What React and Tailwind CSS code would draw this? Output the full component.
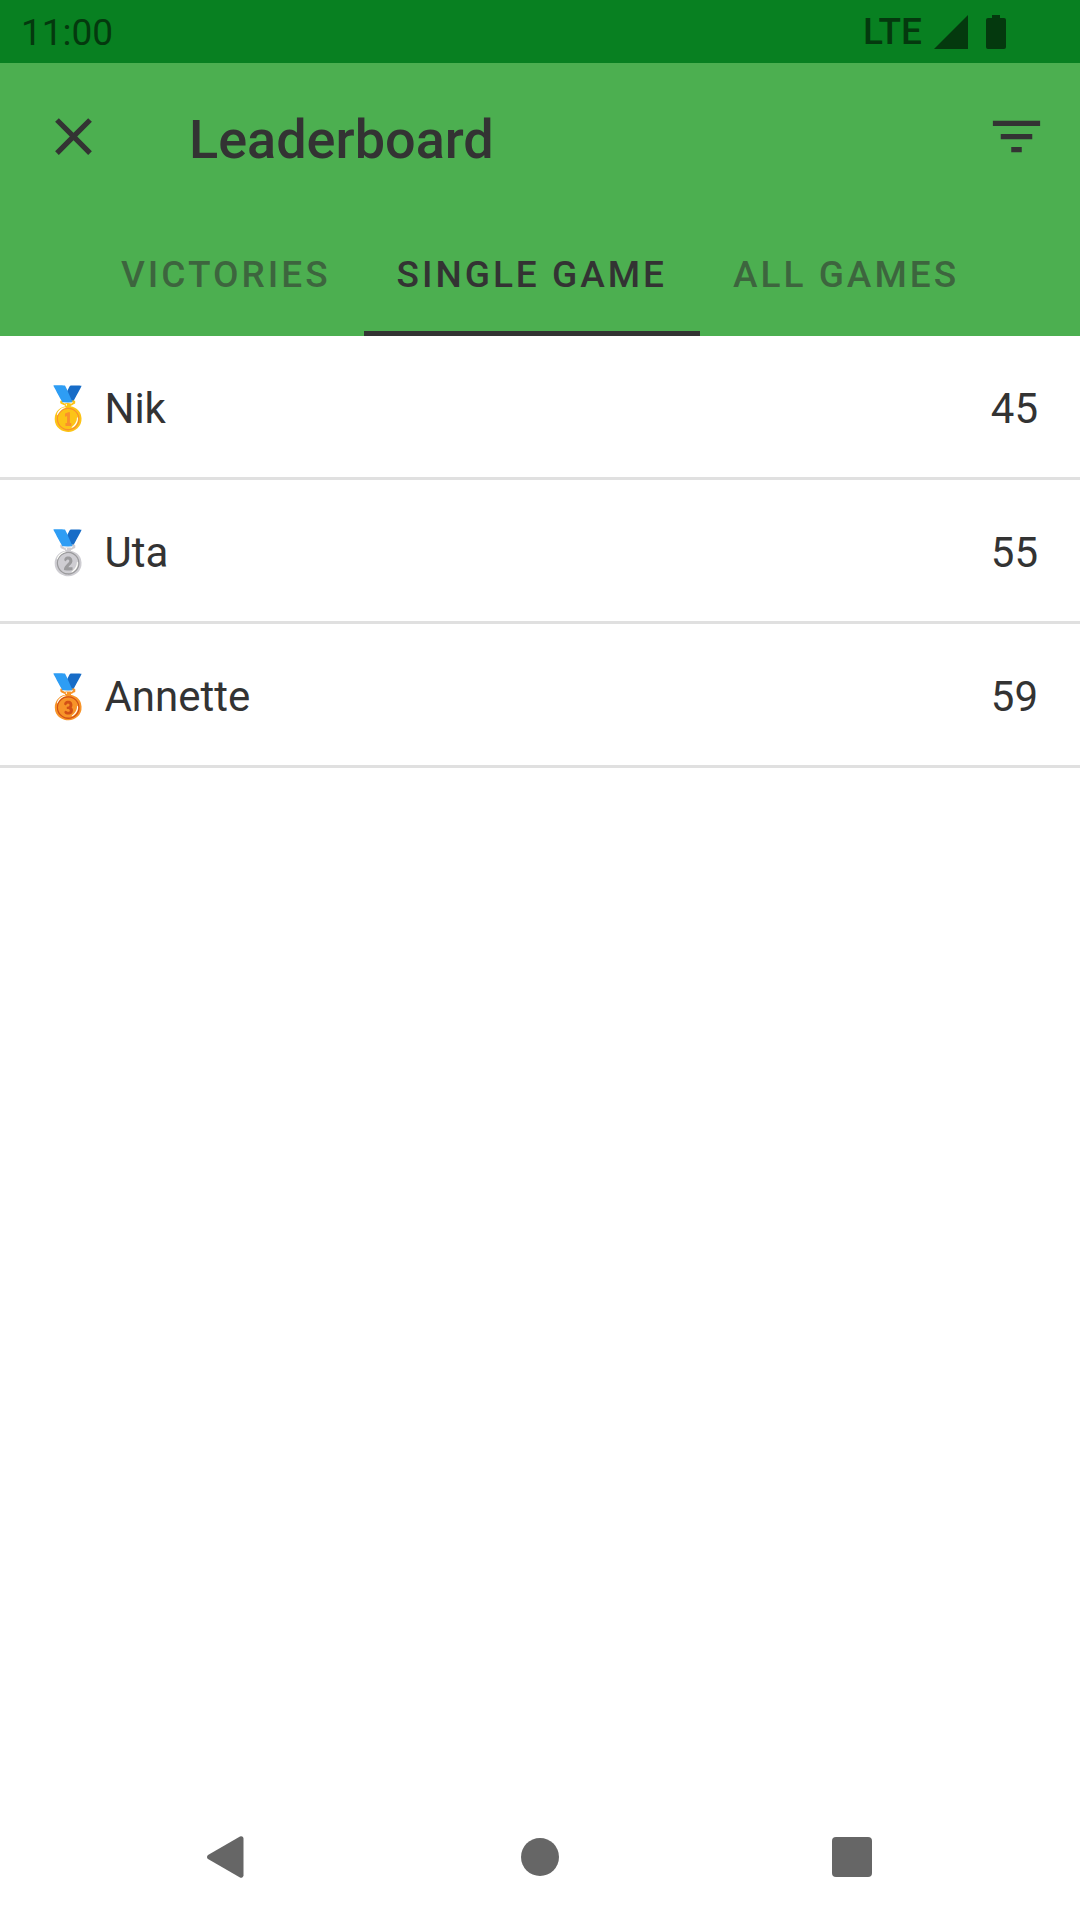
import { useState } from 'react';
import clsx from 'clsx';

const TABS = ['Victories', 'Single game', 'All games'];

const PLAYERS = [
  { medal: '🥇', name: 'Nik', score: 45 },
  { medal: '🥈', name: 'Uta', score: 55 },
  { medal: '🥉', name: 'Annette', score: 59 },
];

function StatusBar() {
  return (
    <div className="flex h-[63px] items-center justify-between bg-[#088021] pl-[21px] pr-[74px] text-[37px] leading-[42px] text-[#04390e]">
      <span className="pt-0.5">11:00</span>
      <div className="flex items-center">
        <span className="font-medium">LTE</span>
        <svg viewBox="0 0 34 34" className="ml-3 size-[34px]" fill="currentColor" aria-hidden="true">
          <path d="M34 0v34H0z" />
        </svg>
        <svg viewBox="0 0 20 34" className="ml-[18px] h-[34px] w-5" fill="currentColor" aria-hidden="true">
          <path d="M6 0h8v3h4a2 2 0 0 1 2 2v27a2 2 0 0 1-2 2H2a2 2 0 0 1-2-2V5a2 2 0 0 1 2-2h4z" />
        </svg>
      </div>
    </div>
  );
}

function AppBar() {
  return (
    <div className="flex h-[147px] items-center pl-[42px] pr-8">
      <button type="button" aria-label="Close" className="size-[63px]">
        <svg viewBox="0 0 24 24" fill="currentColor">
          <path d="M19 6.41L17.59 5 12 10.59 6.41 5 5 6.41 10.59 12 5 17.59 6.41 19 12 13.41 17.59 19 19 17.59 13.41 12z" />
        </svg>
      </button>
      <h1 className="ml-[84px] flex-1 pt-1.5 text-[54px] font-medium leading-[63px]">Leaderboard</h1>
      <button type="button" aria-label="Filter" className="size-[63px]">
        <svg viewBox="0 0 24 24" fill="currentColor">
          <path d="M10 18h4v-2h-4v2zM3 6v2h18V6H3zm3 7h12v-2H6v2z" />
        </svg>
      </button>
    </div>
  );
}

function Tabs({ value, onChange }) {
  return (
    <div role="tablist" className="flex h-[126px] justify-center">
      {TABS.map((tab) => (
        <button key={tab} type="button" role="tab" aria-selected={tab === value} onClick={() => onChange(tab)}
          className={clsx(
            'border-y-[5px] border-t-transparent px-[33px] pt-[3px] text-[37px] font-medium uppercase leading-[42px] tracking-[3px]',
            tab === value ? 'border-b-[#333333]' : 'border-b-transparent text-[#333333]/60',
          )}>
          {tab}
        </button>
      ))}
    </div>
  );
}

function NavBar() {
  return (
    <nav className="flex h-[126px] items-center justify-center text-[#666666]">
      <div className="grid w-[87%] grid-cols-3 justify-items-center">
        <button type="button" aria-label="Back" className="size-[42px]">
          <svg viewBox="0 0 42 42" fill="currentColor">
            <path d="M34 0.500a2.500 2.500 0 0 1 3.500 2v37a2.500 2.500 0 0 1-3.500 2L2 23a2.500 2.500 0 0 1 0-4z" />
          </svg>
        </button>
        <button type="button" aria-label="Home" className="size-[42px]">
          <svg viewBox="0 0 42 42" fill="currentColor">
            <circle cx="21" cy="21" r="19" />
          </svg>
        </button>
        <button type="button" aria-label="Recent apps" className="size-[42px]">
          <svg viewBox="0 0 42 42" fill="currentColor">
            <rect y="1" width="40" height="40" rx="4" />
          </svg>
        </button>
      </div>
    </nav>
  );
}

export default function App() {
  const [tab, setTab] = useState('Single game');

  return (
    <div className="flex min-h-screen flex-col bg-white font-['Roboto',sans-serif] text-[#333333]">
      <StatusBar />
      <header className="bg-[#4caf50]">
        <AppBar />
        <Tabs value={tab} onChange={setTab} />
      </header>
      <ol className="flex-1">
        {PLAYERS.map((player) => (
          <li key={player.name}
            className="flex h-36 items-center justify-between border-b-[3px] border-[#e0e0e0] px-[42px] pt-1 text-[42px] leading-[50px]">
            <span>{player.medal} {player.name}</span>
            <span>{player.score}</span>
          </li>
        ))}
      </ol>
      <NavBar />
    </div>
  );
}
